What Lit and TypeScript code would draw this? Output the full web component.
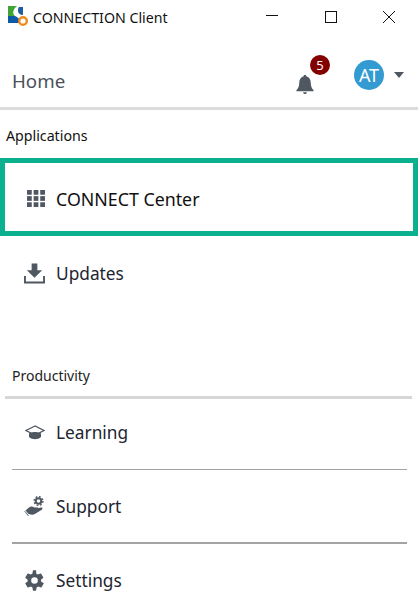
import { LitElement, html, css } from "lit";
import { customElement } from "lit/decorators.js";

@customElement("app-root")
export class AppRoot extends LitElement {
  static styles = css`
    :host { display: block; width: 418px; height: 613px; overflow: hidden; background: #fff; font-family: "Noto Sans", "Open Sans", sans-serif; color: #1c2530; }
    svg { display: block; flex: none; }
    .title { height: 33px; display: flex; align-items: center; padding-left: 8px; }
    .logo { margin-top: -2px; }
    .title .name { font-size: 14.2px; margin-left: 5px; color: #111; flex: 1; padding-top: 1px; }
    .win { display: flex; gap: 46.5px; margin-right: 23px; align-items: center; }
    .header { height: 74px; display: flex; align-items: center; border-bottom: 3px solid #dcdcdc; }
    .home { font-size: 18.7px; color: #4a5159; margin-left: 12px; flex: 1; padding-top: 21px; }
    .bell { position: relative; margin-right: 39px; margin-top: 28px; }
    .badge { position: absolute; left: 15px; top: -19px; width: 20px; height: 20px; border-radius: 50%; background: #830000; color: #fff; font-size: 13px; display: flex; align-items: center; justify-content: center; }
    .avatar { width: 30px; height: 30px; border-radius: 50%; background: #339ad2; color: #fff; font-size: 18px; display: flex; align-items: center; justify-content: center; margin-right: 10px; margin-top: 10px; }
    .caret { margin-right: 14px; margin-top: 10px; }
    .apps { font-size: 14.2px; margin: 16px 0 0 6px; height: 32px; line-height: 20px; color: #111; }
    .hl { height: 68px; border: 5px solid #0bb08f; display: flex; align-items: center; padding-left: 18px; gap: 8px; font-size: 17.8px; color: #111; }
    .hl .ic { padding-top: 2px; }
    .hl .txt { padding-top: 3px; }
    .item { display: flex; align-items: center; padding-left: 22px; gap: 9px; font-size: 17.3px; }
    .upd { height: 74px; }
    .prod { font-size: 14px; margin: 56px 0 0 12px; height: 30px; line-height: 20px; color: #222; }
    .rule0 { height: 3px; margin: 0 6px 0 5px; background: #d6d6d6; }
    .r1 { height: 66px; padding-bottom: 4px; }
    .r2 { height: 72px; }
    .r3 { height: 72px; padding-bottom: 3px; }
    .sep { height: 1px; margin: 0 11px 0 12px; background: #a3a3a3; }
    .sep2 { height: 2px; margin: 0 11px 0 12px; background: #a3a3a3; }
    .ic { width: 25px; display: flex; justify-content: center; }
  `;

  render() {
    const ic = "#4f5761";
    return html`
      <div class="title">
        <svg class="logo" width="20" height="20" viewBox="0 0 20 20">
          <path d="M0 0h9C5 3 4 8 7 10H0z" fill="#3fa535"/>
          <path d="M0 10h7c2 1 4 2 5 4v3H0z" fill="#0d5aa6"/>
          <path d="M11 1h4v8c-3 0-5-2-5-4s0-3 1-4z" fill="#1b5f9e"/>
          <circle cx="15" cy="15" r="3.800" fill="#fff" stroke="#f08a1d" stroke-width="2.400"/>
        </svg>
        <span class="name">CONNECTION Client</span>
        <div class="win">
          <svg width="12" height="12" viewBox="0 0 12 12"><path d="M0 4.500h12" stroke="#111" stroke-width="1"/></svg>
          <svg width="12" height="12" viewBox="0 0 12 12"><rect x=".5" y=".5" width="11" height="11" fill="none" stroke="#111"/></svg>
          <svg width="12" height="12" viewBox="0 0 12 12"><path d="M0 0l12 12M12 0L0 12" stroke="#111" stroke-width="1"/></svg>
        </div>
      </div>
      <div class="header">
        <span class="home">Home</span>
        <div class="bell">
          <svg width="20" height="21" viewBox="0 0 20 22"><path d="M10 1c1 0 1.700.7 1.700 1.700C14.500 3.500 16 6 16 9c0 4 1 6 3 8v1H1v-1c2-2 3-4 3-8 0-3 1.500-5.500 4.300-6.300C8.300 1.700 9 1 10 1zM8 19h4c0 1-1 2-2 2s-2-1-2-2z" fill="${ic}"/></svg>
          <span class="badge">5</span>
        </div>
        <span class="avatar">AT</span>
        <svg class="caret" width="10" height="6" viewBox="0 0 10 6"><path d="M0 0h10L5 6z" fill="${ic}"/></svg>
      </div>
      <div class="apps">Applications</div>
      <div class="hl">
        <span class="ic"><svg width="18" height="17" viewBox="0 0 19 18" fill="${ic}">
          <rect x="0" y="0" width="5" height="5"/><rect x="7" y="0" width="5" height="5"/><rect x="14" y="0" width="5" height="5"/>
          <rect x="0" y="6.500" width="5" height="5"/><rect x="7" y="6.500" width="5" height="5"/><rect x="14" y="6.500" width="5" height="5"/>
          <rect x="0" y="13" width="5" height="5"/><rect x="7" y="13" width="5" height="5"/><rect x="14" y="13" width="5" height="5"/>
        </svg></span>
        <span class="txt">CONNECT Center</span>
      </div>
      <div class="item upd">
        <span class="ic"><svg width="21" height="21" viewBox="0 0 22 21" fill="${ic}"><path d="M8 0h6v7h5l-8 8-8-8h5z"/><path d="M0 13h2v6h18v-6h2v8H0z"/></svg></span>
        <span>Updates</span>
      </div>
      <div class="prod">Productivity</div>
      <div class="rule0"></div>
      <div class="item r1">
        <span class="ic"><svg width="20" height="15" viewBox="0 0 20 15"><path d="M10 1L1 5.500 10 10l9-4.500z" fill="none" stroke="${ic}" stroke-width="1.300"/><path d="M4 8.500c1.500-1 4-1.500 6-1.500s4.500.5 6 1.500V12c-1.500 1.500-4 2.200-6 2.200S5.500 13.500 4 12z" fill="${ic}"/></svg></span>
        <span>Learning</span>
      </div>
      <div class="sep"></div>
      <div class="item r2">
        <span class="ic"><svg width="22" height="20" viewBox="0 0 22 20">
          <circle cx="14.500" cy="5" r="2.800" fill="none" stroke="${ic}" stroke-width="2"/>
          <circle cx="14.500" cy="5" r="4.400" fill="none" stroke="${ic}" stroke-width="1.400" stroke-dasharray="1.700 1.750"/>
          <path d="M1.500 14.500 5 11.500c2-1.500 3.500-1 5.500 0h3c1.300 0 1.300 2 0 2h-3l6-2c1.800-.5 2.800 1.200 1.300 2.200l-7 4.300c-2 1.200-3.800.7-5.800 0L4 19.500z" fill="${ic}"/>
          <path d="M1 14.500l4.500 5" stroke="#fff" stroke-width="1"/>
          <path d="M.5 15l4 5" stroke="${ic}" stroke-width=".8"/>
        </svg></span>
        <span>Support</span>
      </div>
      <div class="sep2"></div>
      <div class="item r3">
        <span class="ic"><svg width="21" height="21" viewBox="0 0 24 24"><path d="M19.400 13c.1-.3.100-.7.100-1s0-.7-.1-1l2.500-1.900c.2-.2.300-.5.100-.8l-2.400-4.100c-.1-.2-.5-.3-.7-.2l-3 1.200c-.6-.5-1.300-.9-2-1.200L13.900.8c0-.3-.3-.5-.6-.5H10.700c-.3 0-.5.200-.6.500L9.700 4c-.7.300-1.400.7-2 1.200l-3-1.200c-.3-.1-.6 0-.7.200L1.600 8.300c-.2.300-.1.600.1.800L4.200 11c0 .3-.1.700-.1 1s0 .7.100 1l-2.500 1.900c-.2.200-.3.500-.1.800l2.400 4.100c.1.200.5.300.7.200l3-1.200c.6.500 1.300.9 2 1.200l.4 3.200c.1.300.3.500.6.500h2.600c.3 0 .6-.2.600-.5l.4-3.200c.7-.3 1.400-.7 2-1.200l3 1.200c.3.100.6 0 .7-.2l2.400-4.100c.2-.3.100-.6-.1-.8zM12 15.800a3.800 3.800 0 1 1 0-7.600 3.800 3.800 0 0 1 0 7.600z" fill="${ic}"/></svg></span>
        <span>Settings</span>
      </div>
    `;
  }
}
